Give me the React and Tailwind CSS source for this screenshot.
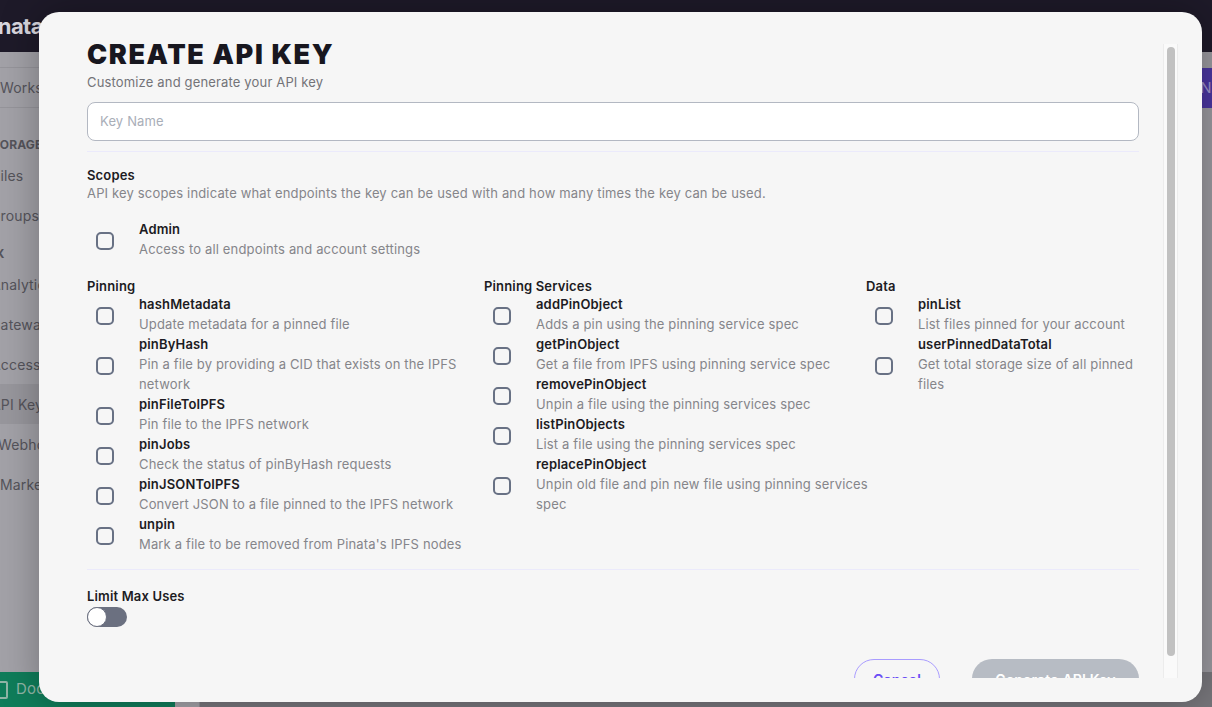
import React from "react";

const pinning = [
  { name: "hashMetadata", desc: "Update metadata for a pinned file" },
  { name: "pinByHash", desc: "Pin a file by providing a CID that exists on the IPFS network" },
  { name: "pinFileToIPFS", desc: "Pin file to the IPFS network" },
  { name: "pinJobs", desc: "Check the status of pinByHash requests" },
  { name: "pinJSONToIPFS", desc: "Convert JSON to a file pinned to the IPFS network" },
  { name: "unpin", desc: "Mark a file to be removed from Pinata's IPFS nodes" },
];

const services = [
  { name: "addPinObject", desc: "Adds a pin using the pinning service spec" },
  { name: "getPinObject", desc: "Get a file from IPFS using pinning service spec" },
  { name: "removePinObject", desc: "Unpin a file using the pinning services spec" },
  { name: "listPinObjects", desc: "List a file using the pinning services spec" },
  { name: "replacePinObject", desc: "Unpin old file and pin new file using pinning services spec" },
];

const data = [
  { name: "pinList", desc: "List files pinned for your account" },
  { name: "userPinnedDataTotal", desc: "Get total storage size of all pinned files" },
];

function Checkbox() {
  return <span className="block w-[18px] h-[18px] rounded-[5px] border-2 border-[#687184]" />;
}

function ScopeRow({ name, desc }) {
  return (
    <div className="flex items-center">
      <div className="pl-[9px] pr-[25px] mt-1 shrink-0">
        <Checkbox />
      </div>
      <div className="min-w-0">
        <p className="text-[13px] leading-5 font-semibold text-[#1c1b22]">{name}</p>
        <p className="text-[13px] leading-5 text-[#85858a]">{desc}</p>
      </div>
    </div>
  );
}

function ScopeColumn({ title, items }) {
  return (
    <div className="flex flex-col -mr-2">
      <p className="text-[13px] leading-4 font-semibold text-[#1c1b22]">{title}</p>
      {items.map((it) => (
        <ScopeRow key={it.name} {...it} />
      ))}
    </div>
  );
}

function Sidebar() {
  const item = "h-10 flex items-center text-[14px] text-[#55545b] whitespace-nowrap";
  return (
    <div className="w-[200px] shrink-0 flex flex-col bg-[#a3a2a8] border-r border-[#8e8d93] overflow-hidden">
      <div className="h-4 border-b border-[#96959b]" />
      <div className="h-10 flex items-center border-b border-[#96959b] text-[14px] text-[#55545b]">Workspace</div>
      <div className="mt-[27px] h-5 flex items-center -ml-[16px] text-[12px] font-bold text-[#55545b]">STORAGE</div>
      <div className={item + " -ml-[8px]"}>Files</div>
      <div className={item + " -ml-[10px]"}>Groups</div>
      <div className="mt-[9px] h-5 flex items-center -ml-[30px] text-[12px] font-bold text-[#55545b]">DEVX</div>
      <div className={item + " -ml-[9px]"}>Analytics</div>
      <div className={item + " -ml-[10px]"}>Gateways</div>
      <div className={item + " -ml-[9px]"}>Access Controls</div>
      <div className={item + " -ml-[9px] bg-[#98979d]"}>API Keys</div>
      <div className={item + " -ml-[2px]"}>Webhooks</div>
      <div className={item}>Marketplace</div>
      <div className="mt-auto h-[35px] w-[175px] bg-[#0f7d5a] flex items-center gap-2 text-[15px] text-[#8fb5a6]">
        <span className="block w-[12px] h-[18px] border-2 border-[#8fb5a6] rounded-[2px] -ml-[4px]" />
        Docs
      </div>
    </div>
  );
}

export default function App() {
  return (
    <div className="relative w-[1212px] h-[707px] overflow-hidden flex flex-col bg-[#9a999f] tracking-[0.01em]" style={{ fontFamily: "Inter, 'Noto Sans', sans-serif" }}>
      <div className="h-[52px] shrink-0 bg-[#1e1a29] flex items-center">
        <span className="-ml-[21px] text-[22px] font-bold text-[#d9d7df] tracking-tight">pinata</span>
      </div>
      <div className="flex-1 flex min-h-0">
        <Sidebar />
        <div className="flex-1 flex flex-col">
          <div className="mt-4 flex justify-end">
            <div className="h-10 -mr-[68px] pl-[10px] pr-4 bg-[#4a36a0] flex items-center text-[15px] text-[#9d94c9] whitespace-nowrap">New Key</div>
          </div>
          <div className="mt-auto h-[35px] bg-[#77767b]" />
        </div>
      </div>

      <div className="absolute left-[39px] top-[12px] w-[1163px] h-[690px] rounded-[20px] bg-[#f6f6f6] shadow-[0_0_40px_rgba(0,0,0,0.3)] flex pr-6 pb-6 overflow-hidden">
        <div className="flex-1 min-w-0 overflow-hidden pt-[29px] pl-12 pr-6">
          <h1 className="text-[27px] leading-[27px] font-black tracking-[0.06em] text-[#18171f]">CREATE API KEY</h1>
          <p className="mt-1 text-[13px] leading-5 text-[#737378]">Customize and generate your API key</p>
          <div className="mt-[10px] h-[39px] rounded-lg border border-[#b3b8c2] bg-white flex items-center px-3 text-[13px] text-[#a9aeb8]">
            Key Name
          </div>
          <div className="mt-[10px] h-px bg-[#ebeafb]" />

          <p className="mt-[15px] text-[13px] leading-4 font-semibold text-[#1c1b22]">Scopes</p>
          <p className="text-[13px] leading-5 text-[#85858a]">
            API key scopes indicate what endpoints the key can be used with and how many times the key can be used.
          </p>
          <div className="mt-4">
            <ScopeRow name="Admin" desc="Access to all endpoints and account settings" />
          </div>

          <div className="mt-[19px] grid grid-cols-[397px_382px_1fr]">
            <ScopeColumn title="Pinning" items={pinning} />
            <ScopeColumn title="Pinning Services" items={services} />
            <ScopeColumn title="Data" items={data} />
          </div>

          <div className="mt-[15px] h-px bg-[#ebeafb]" />
          <p className="mt-[18px] text-[13px] leading-4 font-semibold text-[#1c1b22]">Limit Max Uses</p>
          <div className="mt-[3px] w-10 h-5 rounded-full bg-[#6b7080] flex items-center">
            <span className="block w-5 h-5 rounded-full bg-white border border-[#6b7080]" />
          </div>

          <div className="mt-8 flex justify-end gap-8">
            <button className="h-10 w-[86px] rounded-full border border-[#a99cff] text-[14px] font-semibold text-[#6a4cf5]">Cancel</button>
            <button className="h-10 w-[167px] rounded-full bg-[#b7bcc4] text-[14px] font-semibold text-white">Generate API Key</button>
          </div>
        </div>
        <div className="mt-8 w-[15px] shrink-0 bg-[#fafafa] border-x border-[#ececec] flex justify-center pt-[3px] pb-[22px]">
          <div className="w-2 h-full rounded-full bg-[#c1c1c1]" />
        </div>
      </div>
    </div>
  );
}
